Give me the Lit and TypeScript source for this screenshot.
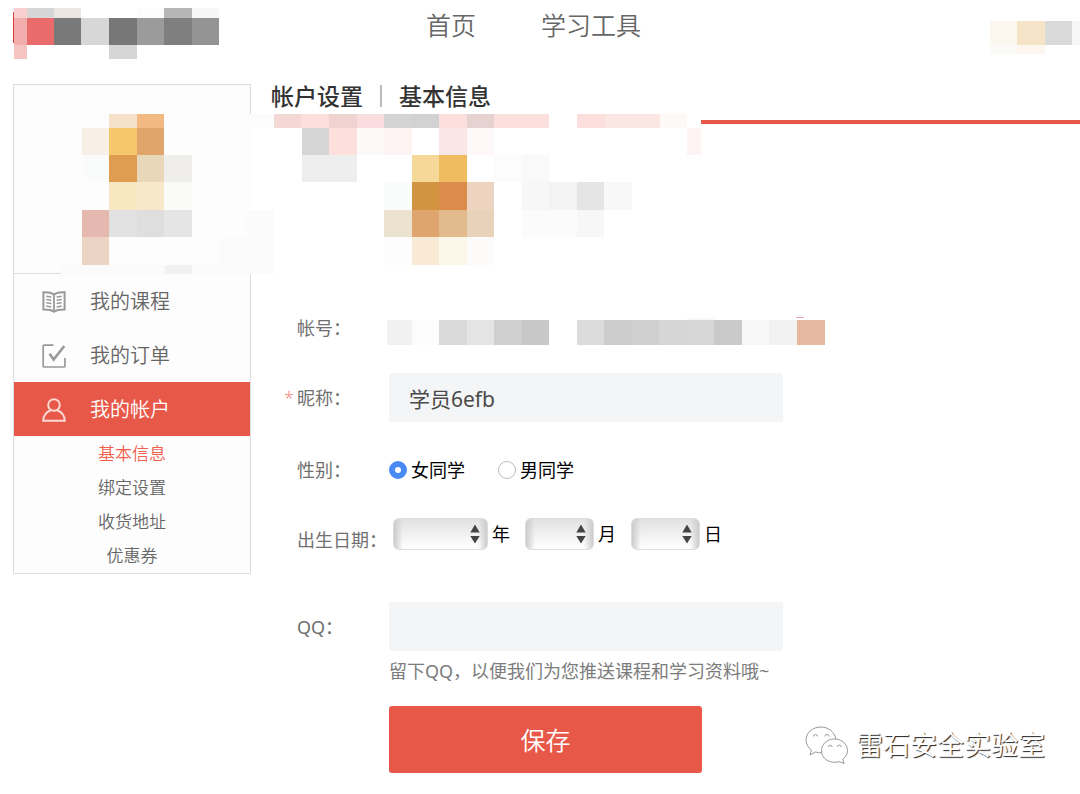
import { LitElement, html, svg, css } from "lit";
import { customElement, property, state } from "lit/decorators.js";
import { classMap } from "lit/directives/class-map.js";

type Cell = [x: number, y: number, w: number, h: number, fill: string];

const LOGO: Cell[] = [
  [0, 4, 1, 31, "#d8423f"],
  [1, 0, 13, 10, "#f9cfcf"], [1, 10, 13, 27, "#f4adad"], [1, 37, 13, 14, "#f6c3c3"],
  [14, 0, 27, 10, "#d6d6d6"], [14, 10, 27, 27, "#e96b6b"],
  [41, 0, 27, 10, "#ece6e2"], [41, 10, 27, 27, "#797979"],
  [68, 10, 28, 27, "#d7d7d7"],
  [96, 10, 28, 27, "#777777"], [96, 37, 28, 14, "#d6d6d6"],
  [124, 0, 27, 10, "#fcfcfc"], [124, 10, 27, 27, "#9b9b9b"],
  [151, 0, 28, 10, "#b6b6b6"], [151, 10, 28, 27, "#7f7f7f"],
  [179, 0, 27, 10, "#f7f7f7"], [179, 10, 27, 27, "#949494"],
];

const USER: Cell[] = [
  [0, 0, 27, 24, "#fcf7ef"], [27, 0, 28, 24, "#f5e4c8"], [55, 0, 27, 24, "#dadada"], [82, 0, 8, 24, "#f6f6f6"],
  [0, 24, 27, 9, "#fbfaf6"], [27, 24, 28, 9, "#fdf7f0"],
];

const PROFILE: Cell[] = [
  [185, 0, 4, 160, "#fdfdfd"], [189, 0, 10, 160, "#ffffff"],
  [185, 0, 28, 14, "#fcfcfc"], [185, 96, 28, 64, "#fbfbfb"], [158, 123, 28, 28, "#fbfbfb"],
  [0, 151, 213, 9, "#fbfbfb"], [104, 151, 27, 9, "#f1f1f1"],
  [21, 0, 27, 14, "#fcfcfc"], [48, 0, 28, 14, "#f6e2cb"], [76, 0, 27, 14, "#f3b982"],
  [21, 14, 27, 27, "#f8efe6"], [48, 14, 28, 27, "#f7c76c"], [76, 14, 27, 27, "#e0a56b"],
  [21, 41, 27, 27, "#fafcfb"], [48, 41, 28, 27, "#de9d51"], [76, 41, 27, 27, "#e8d7b8"], [103, 41, 28, 27, "#f0eeea"],
  [48, 68, 28, 28, "#f7e8c1"], [76, 68, 27, 28, "#f7e8c9"], [103, 68, 28, 28, "#fafaf7"],
  [21, 96, 27, 27, "#e5b9af"], [48, 96, 28, 27, "#e1e1e1"], [76, 96, 27, 27, "#dedede"], [103, 96, 28, 27, "#e5e5e5"],
  [21, 123, 27, 28, "#ecd4c4"],
];

const BANNER: Cell[] = [
  [0, 0, 430, 151, "#ffffff"], [0, 0, 3, 14, "#fcfcfc"], [0, 96, 3, 55, "#fbfbfb"],
  [3, 0, 27, 14, "#f3d8d6"], [30, 0, 28, 14, "#fcdfdc"], [58, 0, 28, 14, "#eed3d0"], [86, 0, 27, 14, "#fadedf"],
  [113, 0, 27, 14, "#d4d4d4"], [140, 0, 28, 14, "#d2d2d2"], [168, 0, 28, 14, "#fcdfdc"], [196, 0, 27, 14, "#e5d2d1"],
  [223, 0, 55, 14, "#fce0dd"], [306, 0, 28, 14, "#fcdfdc"], [334, 0, 55, 14, "#fae6e3"], [389, 0, 27, 14, "#fdf9f7"],
  [31, 14, 27, 27, "#d5d5d5"], [58, 14, 28, 27, "#fddfdc"], [86, 14, 27, 27, "#fdf9f8"], [113, 14, 28, 27, "#fdf3f2"],
  [168, 14, 28, 27, "#fae6e4"], [196, 14, 27, 27, "#fef9f8"], [416, 14, 14, 27, "#fdf3f2"],
  [31, 41, 55, 27, "#eeeeee"], [141, 41, 27, 27, "#f6d898"], [168, 41, 28, 27, "#eebb5e"],
  [223, 41, 28, 27, "#fcfcfc"], [251, 41, 27, 27, "#f9f9f9"],
  [113, 68, 28, 28, "#fafcfb"], [141, 68, 27, 28, "#d39441"], [168, 68, 28, 28, "#db8c4b"], [196, 68, 27, 28, "#ecd4c1"],
  [251, 68, 27, 28, "#f7f7f7"], [278, 68, 28, 28, "#f3f3f3"], [306, 68, 27, 28, "#e5e5e5"], [333, 68, 28, 28, "#f8f8f8"],
  [113, 96, 28, 27, "#ebe2d0"], [141, 96, 27, 27, "#dea56e"], [168, 96, 28, 27, "#e2bb8d"], [196, 96, 27, 27, "#e8d2b9"],
  [251, 96, 55, 27, "#fbfbfb"], [306, 96, 27, 27, "#f7f7f7"],
  [113, 123, 28, 28, "#fdfdfd"], [141, 123, 27, 28, "#f9ead6"], [168, 123, 28, 28, "#fcf7e9"], [196, 123, 27, 28, "#fcfbf9"],
];

const ACCOUNT: Cell[] = [
  [0, 3, 25, 25, "#f1f1f1"], [25, 3, 27, 25, "#fcfcfc"], [52, 3, 28, 25, "#dadada"], [80, 3, 27, 25, "#e4e4e4"],
  [107, 3, 28, 25, "#cfcfcf"], [135, 3, 27, 25, "#c8c8c8"],
  [190, 3, 27, 25, "#dcdcdc"], [217, 3, 28, 25, "#cdcdcd"], [245, 3, 27, 25, "#cfcfcf"], [272, 3, 28, 25, "#d6d6d6"],
  [300, 1, 27, 2, "#f7f7f7"], [300, 3, 27, 25, "#d7d7d7"], [327, 3, 28, 25, "#cacaca"], [355, 3, 27, 25, "#f8f8f8"],
  [382, 3, 28, 25, "#f2f2f2"], [409, 0, 8, 1, "#f0a3a8"], [410, 3, 28, 25, "#e5b9a0"],
];

/** A block of flat coloured tiles that hides private content. */
@customElement("pixel-mosaic")
export class PixelMosaic extends LitElement {
  @property({ attribute: false }) cells: Cell[] = [];
  @property({ type: Number }) w = 0;
  @property({ type: Number }) h = 0;

  static styles = css`
    :host { display: block; }
    svg { display: block; overflow: visible; }
  `;

  render() {
    return html`<svg width=${this.w} height=${this.h} shape-rendering="crispEdges" aria-hidden="true">
      ${this.cells.map(([x, y, w, h, f]) => svg`<rect x=${x} y=${y} width=${w} height=${h} fill=${f}></rect>`)}
    </svg>`;
  }
}

const icons = {
  book: svg`
    <path d="M12 4.400C9.400 2.600 5 2 1.400 2.200v17.300c3.900-.1 7.800.3 10.600 2.200 2.800-1.900 6.700-2.300 10.600-2.200V2.200C19 2 14.600 2.600 12 4.400z" stroke-width="2"/>
    <path d="M12 4.400V21.500" stroke-width="1.800"/>
    <path d="M4.300 6.200l5 .8M4.300 9.500l5 .8M4.300 12.800l5 .8M4.300 16.100l5 .8M19.700 6.200l-5 .8M19.700 9.500l-5 .8M19.700 12.800l-5 .8M19.700 16.100l-5 .8" stroke-width="1.500"/>`,
  order: svg`
    <path d="M11.500 1.200H2.200Q1.200 1.200 1.200 2.200V22Q1.200 23 2.200 23H22Q23 23 23 22V14" stroke-width="1.700"/>
    <path d="M7.600 9.800l4 5.800L22.300 2" stroke-width="2.600"/>`,
  user: svg`
    <circle cx="12" cy="7" r="5.800" stroke-width="2"/>
    <path d="M8.800 12.200C4 13.800 1.500 18 1.200 22.800H22.800C22.500 18 20 13.800 15.200 12.200" stroke-width="2"/>`,
};

@customElement("app-root")
export class AppRoot extends LitElement {
  @state() private gender = "female";

  static styles = css`
    :host {
      display: block;
      position: relative;
      min-height: 100vh;
      box-sizing: border-box;
      background: #fff;
      color: #666;
      font-family: "Noto Sans", "Noto Sans CJK SC", sans-serif;
      font-size: 18px;
      font-weight: 350;
      line-height: 28px;
    }
    * { box-sizing: border-box; }
    a { color: inherit; text-decoration: none; }
    h1, p { margin: 0; font-weight: inherit; }

    .top { display: flex; align-items: flex-start; padding: 8px 0 0 13px; }
    .nav { display: flex; gap: 65px; margin: 0 auto 0 207px; font-size: 25px; line-height: 34px; }
    .user { margin-top: 13px; }

    .body { display: flex; align-items: flex-start; gap: 20px; padding: 25px 0 0 13px; }
    .side { flex: none; width: 238px; border: 1px solid #ddd; background: #fdfdfd; }
    .profile { padding: 29px 0 0 47px; border-bottom: 1px solid #ddd; height: 189px; }
    .item { display: grid; grid-template-columns: 24px 1fr; gap: 24px; align-items: center; height: 54px; padding: 1px 28px 0; font-size: 20px; }
    .item svg { fill: none; stroke: #999; }
    .item.active { background: #e75849; color: #fff; }
    .item.active svg { stroke: #fbd9d5; }
    .sub { display: grid; padding-top: 1px; text-align: center; font-size: 17px; line-height: 34px; }
    .sub .current { color: #f0604d; }

    .main { flex: 1; min-width: 0; }
    .title { display: flex; align-items: center; gap: 17px; height: 36px; padding-bottom: 12px; color: #333; font-size: 23px; font-weight: 500; }
    .head { border-bottom: 4px solid #e75849; }
    .bar { width: 2px; height: 22px; background: #bbb; }
    .banner { position: relative; margin-top: -10px; }

    .form { padding: 49px 20px 22px 13px; color: #707070; font-weight: 400; }
    .row { display: grid; grid-template-columns: 13px 92px minmax(0, 1fr); align-items: center; }
    .label { grid-column: 2; }
    .star { color: #f08a80; font-weight: 350; }
    .field { width: 100%; max-width: 394px; height: 49px; padding: 0 20px; border: 0; border-radius: 3px; background: #f4f5f7; color: #4a4a4a; font: inherit; font-size: 21px; outline: none; }
    .account { align-items: start; height: 32px; }
    .account pixel-mosaic { margin: 3px 0 0 -2px; }
    .nick { margin-top: 27px; }
    .gender { margin-top: 34px; }
    .birth { margin-top: 34px; align-items: end; height: 36px; }
    .qq { margin-top: 48px; }

    .choices { display: flex; gap: 33px; color: #000; }
    .choice { display: flex; align-items: center; gap: 4px; }
    .radio { appearance: none; width: 18px; height: 18px; margin: 0; border: 1px solid #bbb; border-radius: 50%; background: #fff; }
    .radio:checked { border: 6px solid #4a8af4; }

    .dates { display: flex; align-self: start; padding-left: 4px; gap: 15px; color: #000; }
    .date { display: flex; align-items: center; gap: 4px; }
    .pick { display: grid; align-items: center; }
    .pick select, .pick svg { grid-area: 1 / 1; }
    .pick svg { justify-self: end; margin-right: 8px; pointer-events: none; }
    .select { appearance: none; width: 69px; height: 32px; margin: 0; border: 1px solid #ddd; border-radius: 6px; background: linear-gradient(90deg, #ccc 0, #ccc0 9px calc(100% - 9px), #ccc), linear-gradient(#e2e2e2, #fff); font: inherit; }
    .year { width: 95px; }

    .below { display: grid; padding-left: 105px; }
    .tip { margin: 6px 0 21px; color: #7c7c7c; }
    .save { width: 100%; max-width: 313px; height: 67px; padding: 0; border: 0; border-radius: 3px; background: #e75849; color: #fff; font: inherit; font-size: 25px; font-weight: 350; }

    .mark { position: absolute; right: 35px; bottom: 30px; display: flex; align-items: center; gap: 8px; color: #fff; font-size: 27px; font-weight: 400; line-height: 40px; text-shadow: 1px 1px 1px #222; pointer-events: none; }
    .mark svg { fill: #fff; stroke: #999; stroke-width: 1; }
  `;

  private item(icon: keyof typeof icons, text: string, active = false) {
    return html`<a href="#" class=${classMap({ item: true, active })}>
      <svg width="24" height="24" viewBox="0 0 24 24" aria-hidden="true">${icons[icon]}</svg>
      <span>${text}</span>
    </a>`;
  }

  private radio(value: string, text: string) {
    return html`<label class="choice">
      <input class="radio" type="radio" name="gender" .checked=${this.gender === value} @change=${() => (this.gender = value)} />
      ${text}
    </label>`;
  }

  private date(unit: string, wide = false) {
    return html`<label class="date">
      <span class="pick">
        <select class=${classMap({ select: true, year: wide })} aria-label=${unit}><option></option></select>
        <svg width="10" height="20" viewBox="0 0 10 20" fill="#444" aria-hidden="true">
          <path d="M5 0.500L9.700 8.500H0.300zM5 19.500L9.700 12H0.300z" />
        </svg>
      </span>
      ${unit}
    </label>`;
  }

  render() {
    return html`
      <header class="top">
        <pixel-mosaic .cells=${LOGO} w="206" h="51"></pixel-mosaic>
        <nav class="nav"><a href="#">首页</a><a href="#">学习工具</a></nav>
        <pixel-mosaic class="user" .cells=${USER} w="90" h="33"></pixel-mosaic>
      </header>
      <div class="body">
        <aside class="side">
          <div class="profile"><pixel-mosaic .cells=${PROFILE} w="131" h="160"></pixel-mosaic></div>
          ${this.item("book", "我的课程")} ${this.item("order", "我的订单")} ${this.item("user", "我的帐户", true)}
          <nav class="sub">
            <a href="#" class="current">基本信息</a>
            <a href="#">绑定设置</a>
            <a href="#">收货地址</a>
            <a href="#">优惠券</a>
          </nav>
        </aside>
        <main class="main">
          <div class="head">
            <h1 class="title"><span>帐户设置</span><span class="bar"></span><span>基本信息</span></h1>
          </div>
          <pixel-mosaic class="banner" .cells=${BANNER} w="430" h="151"></pixel-mosaic>
          <form class="form" @submit=${(e: Event) => e.preventDefault()}>
            <div class="row account">
              <span class="label">帐号：</span>
              <pixel-mosaic .cells=${ACCOUNT} w="438" h="28"></pixel-mosaic>
            </div>
            <div class="row nick">
              <span class="star">*</span>
              <label class="label" for="nick">昵称：</label>
              <input class="field" id="nick" type="text" value="学员6efb" />
            </div>
            <div class="row gender">
              <span class="label">性别：</span>
              <div class="choices">${this.radio("female", "女同学")} ${this.radio("male", "男同学")}</div>
            </div>
            <div class="row birth">
              <span class="label">出生日期：</span>
              <div class="dates">${this.date("年", true)} ${this.date("月")} ${this.date("日")}</div>
            </div>
            <div class="row qq">
              <label class="label" for="qq">QQ：</label>
              <input class="field" id="qq" type="text" />
            </div>
            <div class="below">
              <p class="tip">留下QQ，以便我们为您推送课程和学习资料哦~</p>
              <button class="save" type="submit">保存</button>
            </div>
          </form>
        </main>
      </div>
      <div class="mark">
        <svg width="43" height="38" viewBox="0 0 43 38" aria-hidden="true">
          <path d="M16 1C7.500 1 1 6.800 1 14c0 4.200 2.200 7.700 5.500 10L5 29l5.500-3c2 .6 4 .8 6.500.8L31 13C29.500 6 23.500 1 16 1z" />
          <path d="M29.500 13C22 13 16.500 18.200 16.500 24.700S22 36.300 29.500 36.300c1.700 0 3.200-.2 4.600-.7L39 37.500l-1.200-4.200c2.700-2 4.700-5 4.700-8.600C42.500 18.200 37 13 29.500 13z" />
          <g fill="none"><path d="M8.500 10.500a2 2 0 0 1 4 0M20 10.500a2 2 0 0 1 4 0M23.500 21a1.800 1.800 0 0 1 3.600 0M32.500 21a1.800 1.800 0 0 1 3.600 0" /></g>
        </svg>
        <span>雷石安全实验室</span>
      </div>
    `;
  }
}
